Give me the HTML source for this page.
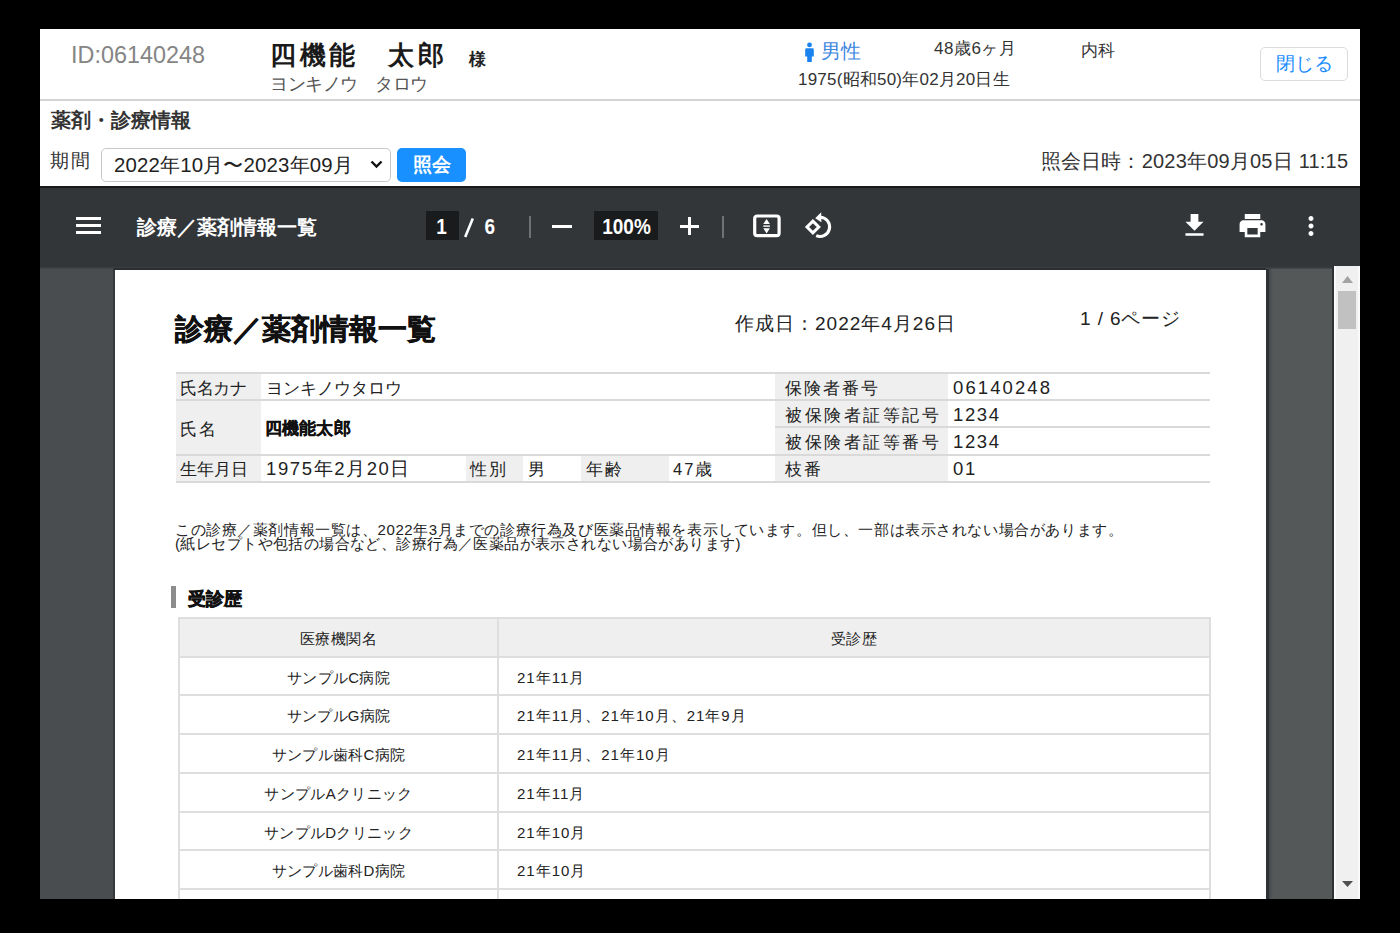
<!DOCTYPE html>
<html><head><meta charset="utf-8">
<style>
*{margin:0;padding:0;box-sizing:border-box}
html,body{width:1400px;height:933px;overflow:hidden;background:#000;font-family:"Liberation Sans",sans-serif;color:#222}
.a{position:absolute;white-space:nowrap;line-height:1}
#app{position:absolute;left:40px;top:29px;width:1320px;height:870px;background:#fff;overflow:hidden}
.it{font-size:16.5px;letter-spacing:2px;color:#222}
.iv{font-size:18.5px;letter-spacing:1.6px;color:#222}
.th{font-size:15px;letter-spacing:0.4px;color:#222;text-align:center}
.td{font-size:15px;letter-spacing:0.3px;color:#222}
.td2{font-size:15px;letter-spacing:1px;color:#222}
</style></head><body>
<div id="app">
  <!-- header -->
  <div class="a" style="left:31px;top:15.2px;font-size:23.4px;color:#858585">ID:06140248</div>
  <div class="a" style="left:230px;top:13px;font-size:26px;letter-spacing:3.5px;font-weight:bold;color:#1a1a1a">四機能　太郎</div>
  <div class="a" style="left:429px;top:22px;font-size:17px;font-weight:bold;color:#222">様</div>
  <div class="a" style="left:230px;top:46px;font-size:18px;letter-spacing:-0.5px;color:#555">ヨンキノウ　タロウ</div>
  <svg class="a" style="left:763.7px;top:13px" width="11" height="20" viewBox="0 0 11 20"><circle cx="5.5" cy="2.9" r="2.4" fill="#1a82ee"/><path d="M1.2 7.6q0-1.4 1.4-1.4h5.8q1.4 0 1.4 1.4v6.8h-2v5.6h-4.6v-5.6h-2z" fill="#1a82ee"/></svg>
  <div class="a" style="left:781px;top:12px;font-size:20px;color:#3d86e0">男性</div>
  <div class="a" style="left:894px;top:11px;font-size:17px;letter-spacing:0.5px;color:#333">48歳6ヶ月</div>
  <div class="a" style="left:1041px;top:13px;font-size:17px;color:#333">内科</div>
  <div class="a" style="left:758px;top:42px;font-size:17px;letter-spacing:0.22px;color:#333">1975(昭和50)年02月20日生</div>
  <div class="a" style="left:1220px;top:18px;width:88px;height:34px;border:1px solid #dcdcdc;border-radius:5px"></div>
  <div class="a" style="left:1236px;top:25px;font-size:19px;color:#1a8cff">閉じる</div>
  <div class="a" style="left:0;top:70px;width:1320px;height:2px;background:#d4d4d4"></div>

  <div class="a" style="left:11px;top:81px;font-size:20px;font-weight:bold;color:#333">薬剤・診療情報</div>
  <div class="a" style="left:10px;top:122px;font-size:19px;letter-spacing:2px;color:#333">期間</div>
  <div class="a" style="left:61px;top:119px;width:290px;height:34px;border:1px solid #c8c8c8;border-radius:5px"></div>
  <div class="a" style="left:74px;top:126px;font-size:20.4px;letter-spacing:0.17px;color:#222">2022年10月〜2023年09月</div>
  <svg class="a" style="left:330px;top:131px" width="13" height="9" viewBox="0 0 13 9"><path d="M1.5 1.5l5 5 5-5" stroke="#111" stroke-width="2.4" fill="none"/></svg>
  <div class="a" style="left:357px;top:119px;width:69px;height:34px;background:#1890ff;border-radius:5px"></div>
  <div class="a" style="left:373px;top:126px;font-size:19px;font-weight:bold;color:#fff">照会</div>
  <div class="a" style="right:12px;top:122px;font-size:20px;letter-spacing:0.2px;color:#333">照会日時：2023年09月05日 11:1<span style="letter-spacing:0">5</span></div>

  <!-- toolbar -->
  <div class="a" style="left:0;top:157px;width:1320px;height:81px;background:#323639;border-top:2px solid #1a1a1a"></div>

  <!-- toolbar contents -->
  <svg class="a" style="left:36px;top:188px" width="25" height="17" viewBox="0 0 25 17"><rect x="0" y="0" width="25" height="3" fill="#fff"/><rect x="0" y="7" width="25" height="3" fill="#fff"/><rect x="0" y="14" width="25" height="3" fill="#fff"/></svg>
  <div class="a" style="left:97px;top:188px;font-size:20px;font-weight:bold;color:#fff">診療／薬剤情報一覧</div>
  <div class="a" style="left:386px;top:182px;width:33px;height:29px;background:#191b1c"></div>
  <div class="a" style="left:385px;top:189px;width:33px;text-align:center;font-size:19px;font-weight:bold;color:#fff;transform:scaleY(1.15);transform-origin:50% 80%">1</div>
  <svg class="a" style="left:423px;top:188px" width="12" height="22" viewBox="0 0 12 22"><path d="M2.2 20L9.8 1.5" stroke="#fff" stroke-width="2.6"/></svg>
  <div class="a" style="left:444.5px;top:189px;font-size:19px;font-weight:bold;color:#fff;transform:scaleY(1.15);transform-origin:50% 80%">6</div>
  <div class="a" style="left:489px;top:187px;width:2px;height:22px;background:#6f7275"></div>
  <div class="a" style="left:512px;top:196px;width:20px;height:3px;background:#fff"></div>
  <div class="a" style="left:554px;top:182px;width:64px;height:29px;background:#191b1c"></div>
  <div class="a" style="left:554.5px;top:189px;width:64px;text-align:center;font-size:19px;font-weight:bold;color:#fff;transform:scaleY(1.15);transform-origin:50% 80%">100%</div>
  <div class="a" style="left:640px;top:196px;width:19px;height:3px;background:#fff"></div>
  <div class="a" style="left:648px;top:188px;width:3px;height:18px;background:#fff"></div>
  <div class="a" style="left:682px;top:187px;width:2px;height:22px;background:#6f7275"></div>
  <svg class="a" style="left:712px;top:185px" width="29" height="24" viewBox="0 0 29 24">
    <rect x="2.7" y="2" width="24.4" height="19.7" rx="2.5" fill="none" stroke="#fff" stroke-width="3.2"/>
    <path d="M11.3 10L14.6 5 17.9 10z M11.3 14.2h6.6L14.6 19.4z" fill="#fff"/><rect x="11.3" y="11.4" width="6.6" height="1.4" fill="#fff"/>
  </svg>
  <svg class="a" style="left:758px;top:177px" width="42" height="38" viewBox="0 0 42 38">
    <path d="M14.9 15.1L20.8 21 14.9 26.9 9 21z" fill="none" stroke="#fff" stroke-width="3"/>
    <path d="M22.3 11.2A9.6 9.6 0 1 1 18.2 29.6" fill="none" stroke="#fff" stroke-width="3.1"/>
    <path d="M17.2 12.2L23.2 6.3 23.4 16.2z" fill="#fff"/>
  </svg>
  <svg class="a" style="left:1138.7px;top:181.1px" width="31" height="31" viewBox="0 0 24 24"><path d="M19 9h-4V3H9v6H5l7 7 7-7zM5 18v2h14v-2H5z" fill="#fff"/></svg>
  <svg class="a" style="left:1197px;top:181px" width="31" height="31" viewBox="0 0 24 24"><path d="M19 8H5c-1.66 0-3 1.34-3 3v6h4v4h12v-4h4v-6c0-1.660-1.34-3-3-3zm-3 11H8v-5h8v5zm3-7c-.55 0-1-.45-1-1s.45-1 1-1 1 .45 1 1-.45 1-1 1zm-1-9H6v4h12V3z" fill="#fff"/></svg>
  <svg class="a" style="left:1255.8px;top:182.1px" width="30" height="30" viewBox="0 0 24 24"><path d="M12 8c1.1 0 2-.9 2-2s-.9-2-2-2-2 .9-2 2 .9 2 2 2zm0 2c-1.1 0-2 .9-2 2s.9 2 2 2 2-.9 2-2-.9-2-2-2zm0 6c-1.1 0-2 .9-2 2s.9 2 2 2 2-.9 2-2-.9-2-2-2z" fill="#fff"/></svg>

  <!-- viewer -->
  <div class="a" style="left:0;top:238px;width:1320px;height:632px;background:#545859"></div>
  <div class="a" style="left:0;top:238px;width:75px;height:632px;background:#494d50"></div>
  <div class="a" style="left:0;top:237px;width:1294px;height:3px;background:linear-gradient(#2e3235,#45494c)"></div>
  <div class="a" style="left:73px;top:239px;width:2px;height:631px;background:#35393c"></div>
  <div class="a" style="left:74px;top:239px;width:1152px;height:2px;background:#2a2e31"></div>
  <div class="a" style="left:1226px;top:240px;width:3px;height:630px;background:#2e3235"></div>
  <div class="a" style="left:1229px;top:240px;width:4px;height:630px;background:linear-gradient(90deg,#44484b,#545859)"></div>
  <div class="a" style="left:1292px;top:237px;width:2px;height:633px;background:#2e3235"></div>
  <div class="a" style="left:1294px;top:237px;width:26px;height:633px;background:#f0f0f0;border-left:2px solid #fbfbfb;border-right:2px solid #fafafa"></div>
  <div class="a" style="left:1298px;top:262px;width:18px;height:38px;background:#c1c1c1"></div>
  <svg class="a" style="left:1302px;top:247px" width="11" height="7" viewBox="0 0 11 7"><path d="M0 7L5.5 0 11 7z" fill="#a3a3a3"/></svg>
  <svg class="a" style="left:1302px;top:852px" width="11" height="6" viewBox="0 0 11 6"><path d="M0 0h11L5.5 6z" fill="#505050"/></svg>

  <!-- page -->
  <div id="page" class="a" style="left:75px;top:241px;width:1151px;height:629px;background:#fff;overflow:hidden">
    <div class="a" style="left:60px;top:45px;font-size:28.7px;font-weight:bold;-webkit-text-stroke:0.45px #111;color:#111">診療／薬剤情報一覧</div>
    <div class="a" style="left:620px;top:44px;font-size:19px;letter-spacing:1px;color:#222">作成日：2022年4月26日</div>
    <div class="a" style="left:965px;top:39px;font-size:19px;letter-spacing:0.9px;color:#222">1 / 6ページ</div>
    <!-- info table -->
    <div class="a" style="left:61px;top:103px;width:85px;height:109px;background:#efefef"></div>
    <div class="a" style="left:351px;top:185px;width:57px;height:27px;background:#efefef"></div>
    <div class="a" style="left:466px;top:185px;width:88px;height:27px;background:#efefef"></div>
    <div class="a" style="left:660px;top:103px;width:173px;height:109px;background:#efefef"></div>
    <div class="a" style="left:61px;top:102px;width:1034px;height:2px;background:#d9d9d9"></div>
    <div class="a" style="left:61px;top:129px;width:1034px;height:2px;background:#d9d9d9"></div>
    <div class="a" style="left:660px;top:156px;width:435px;height:2px;background:#d9d9d9"></div>
    <div class="a" style="left:61px;top:184px;width:1034px;height:2px;background:#d9d9d9"></div>
    <div class="a" style="left:61px;top:211px;width:1034px;height:2px;background:#d9d9d9"></div>
    <div class="a it" style="left:65px;top:110px;letter-spacing:-0.3px">氏名カナ</div>
    <div class="a it" style="left:151px;top:110px;letter-spacing:0px">ヨンキノウタロウ</div>
    <div class="a it" style="left:65px;top:151px;letter-spacing:1.5px">氏名</div>
    <div class="a" style="left:149.5px;top:150px;font-size:17px;letter-spacing:0.3px;font-weight:bold;-webkit-text-stroke:0.3px #111;color:#111">四機能太郎</div>
    <div class="a it" style="left:65px;top:191px;letter-spacing:0px">生年月日</div>
    <div class="a iv" style="left:151px;top:190px">1975年2月20日</div>
    <div class="a it" style="left:355px;top:191px">性別</div>
    <div class="a it" style="left:413px;top:191px">男</div>
    <div class="a it" style="left:471px;top:191px">年齢</div>
    <div class="a it" style="left:558px;top:191px">47歳</div>
    <div class="a it" style="left:670px;top:110px">保険者番号</div>
    <div class="a iv" style="left:838px;top:109px;letter-spacing:2.1px">06140248</div>
    <div class="a it" style="left:670px;top:137px;letter-spacing:2.5px">被保険者証等記号</div>
    <div class="a iv" style="left:838px;top:136px">1234</div>
    <div class="a it" style="left:670px;top:164px;letter-spacing:2.5px">被保険者証等番号</div>
    <div class="a iv" style="left:838px;top:163px">1234</div>
    <div class="a it" style="left:670px;top:191px">枝番</div>
    <div class="a iv" style="left:838px;top:190px">01</div>
    <!-- note -->
    <div class="a" style="left:60px;top:251.5px;font-size:15px;letter-spacing:0.58px;color:#222">この診療／薬剤情報一覧は、2022年3月までの診療行為及び医薬品情報を表示しています。但し、一部は表示されない場合があります。</div>
    <div class="a" style="left:60px;top:265.5px;font-size:15px;letter-spacing:0.42px;color:#222">(紙レセプトや包括の場合など、診療行為／医薬品が表示されない場合があります)</div>
    <!-- heading -->
    <div class="a" style="left:56px;top:316px;width:5px;height:22px;background:#8c8c8c"></div>
    <div class="a" style="left:73px;top:320px;font-size:18px;font-weight:bold;-webkit-text-stroke:0.6px #111;color:#111">受診歴</div>
    <!-- history table -->
    <div id="ht" class="a" style="left:64px;top:348px;width:1031px;height:300px">
      <div class="a" style="left:0;top:0;width:1031px;height:39px;background:#efefef"></div>
      <div class="a" style="left:0;top:-1px;width:1031px;height:2px;background:#dedede"></div>
      <div class="a" style="left:0;top:37.7px;width:1031px;height:2px;background:#dedede"></div>
      <div class="a" style="left:0;top:76.4px;width:1031px;height:2px;background:#dedede"></div>
      <div class="a" style="left:0;top:115.1px;width:1031px;height:2px;background:#dedede"></div>
      <div class="a" style="left:0;top:153.8px;width:1031px;height:2px;background:#dedede"></div>
      <div class="a" style="left:0;top:192.5px;width:1031px;height:2px;background:#dedede"></div>
      <div class="a" style="left:0;top:231.2px;width:1031px;height:2px;background:#dedede"></div>
      <div class="a" style="left:0;top:269.9px;width:1031px;height:2px;background:#dedede"></div>
      <div class="a" style="left:0;top:308.6px;width:1031px;height:2px;background:#dedede"></div>
      <div class="a" style="left:-1px;top:-1px;width:2px;height:300px;background:#dedede"></div>
      <div class="a" style="left:1030px;top:-1px;width:2px;height:300px;background:#dedede"></div>
      <div class="a" style="left:318px;top:-1px;width:2px;height:300px;background:#dedede"></div>
      <div class="a th" style="left:0;top:13px;width:319px">医療機関名</div>
      <div class="a th" style="left:319px;top:13px;width:712px">受診歴</div>
      <div class="a td" style="left:0;top:51.7px;width:319px;text-align:center">サンプルC病院</div>
      <div class="a td2" style="left:338px;top:51.7px">21年11月</div>
      <div class="a td" style="left:0;top:90.4px;width:319px;text-align:center">サンプルG病院</div>
      <div class="a td2" style="left:338px;top:90.4px">21年11月、21年10月、21年9月</div>
      <div class="a td" style="left:0;top:129.1px;width:319px;text-align:center">サンプル歯科C病院</div>
      <div class="a td2" style="left:338px;top:129.1px">21年11月、21年10月</div>
      <div class="a td" style="left:0;top:167.8px;width:319px;text-align:center">サンプルAクリニック</div>
      <div class="a td2" style="left:338px;top:167.8px">21年11月</div>
      <div class="a td" style="left:0;top:206.5px;width:319px;text-align:center">サンプルDクリニック</div>
      <div class="a td2" style="left:338px;top:206.5px">21年10月</div>
      <div class="a td" style="left:0;top:245.2px;width:319px;text-align:center">サンプル歯科D病院</div>
      <div class="a td2" style="left:338px;top:245.2px">21年10月</div>
    </div>
  </div>
</div>
</body></html>
